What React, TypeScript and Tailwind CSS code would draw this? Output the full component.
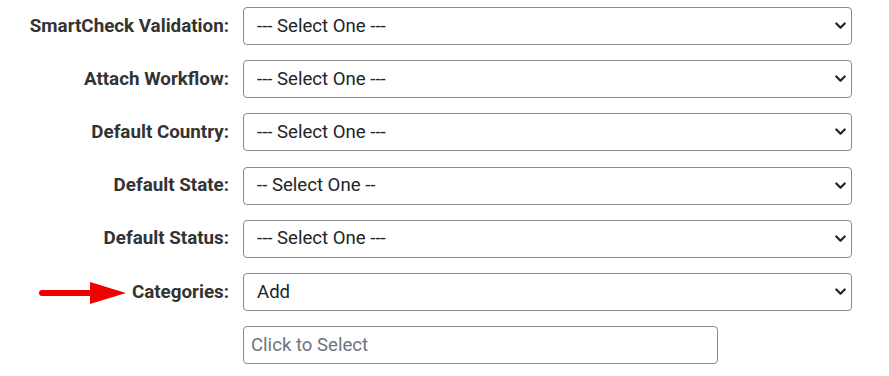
import React from "react";

const Chevron = () => (
  <svg width="11" height="8" viewBox="0 0 11 8" className="absolute right-[5px] top-1/2 -translate-y-1/2">
    <path d="M1.3 1.5 L5.5 5.7 L9.7 1.5" fill="none" stroke="#212529" strokeWidth="2.2" strokeLinecap="round" strokeLinejoin="round" />
  </svg>
);

const rows = [
  { label: "SmartCheck Validation:", value: "--- Select One ---" },
  { label: "Attach Workflow:", value: "--- Select One ---" },
  { label: "Default Country:", value: "--- Select One ---" },
  { label: "Default State:", value: "-- Select One --" },
  { label: "Default Status:", value: "--- Select One ---" },
  { label: "Categories:", value: "Add", arrow: true },
];

export default function App() {
  return (
    <div className="w-[889px] h-[376px] bg-white pt-[7px]" style={{ fontFamily: "Roboto, 'Liberation Sans', sans-serif" }}>
      <div className="flex flex-col gap-[15.2px]">
        {rows.map((r) => (
          <div key={r.label} className="flex items-center h-[38px]">
            <div className="w-[229px] relative flex justify-end items-center">
              {r.arrow && (
                <svg width="90" height="24" viewBox="0 0 90 24" className="absolute left-[38px] top-1/2 -translate-y-1/2 mt-[1px]">
                  <line x1="4" y1="12" x2="56" y2="12" stroke="#f00000" strokeWidth="6" strokeLinecap="round" />
                  <polygon points="52,1 88,12 52,23" fill="#f00000" />
                </svg>
              )}
              <span className="text-[18.8px] font-bold text-[#333333] leading-none">{r.label}</span>
            </div>
            <div className="ml-[14px] relative w-[609px] h-[38px] border border-[#8a8a8a] rounded-[4px] flex items-center pl-[13px]">
              <span className="text-[18.6px] text-[#212529] leading-none">{r.value}</span>
              <Chevron />
            </div>
          </div>
        ))}
        <div className="flex items-center h-[38px]">
          <div className="w-[229px]" />
          <div className="ml-[14px] w-[475px] h-[38px] border border-[#8a8a8a] rounded-[4px] flex items-center pl-[7px]">
            <span className="text-[18.6px] text-[#6c757d] leading-none">Click to Select</span>
          </div>
        </div>
      </div>
    </div>
  );
}
